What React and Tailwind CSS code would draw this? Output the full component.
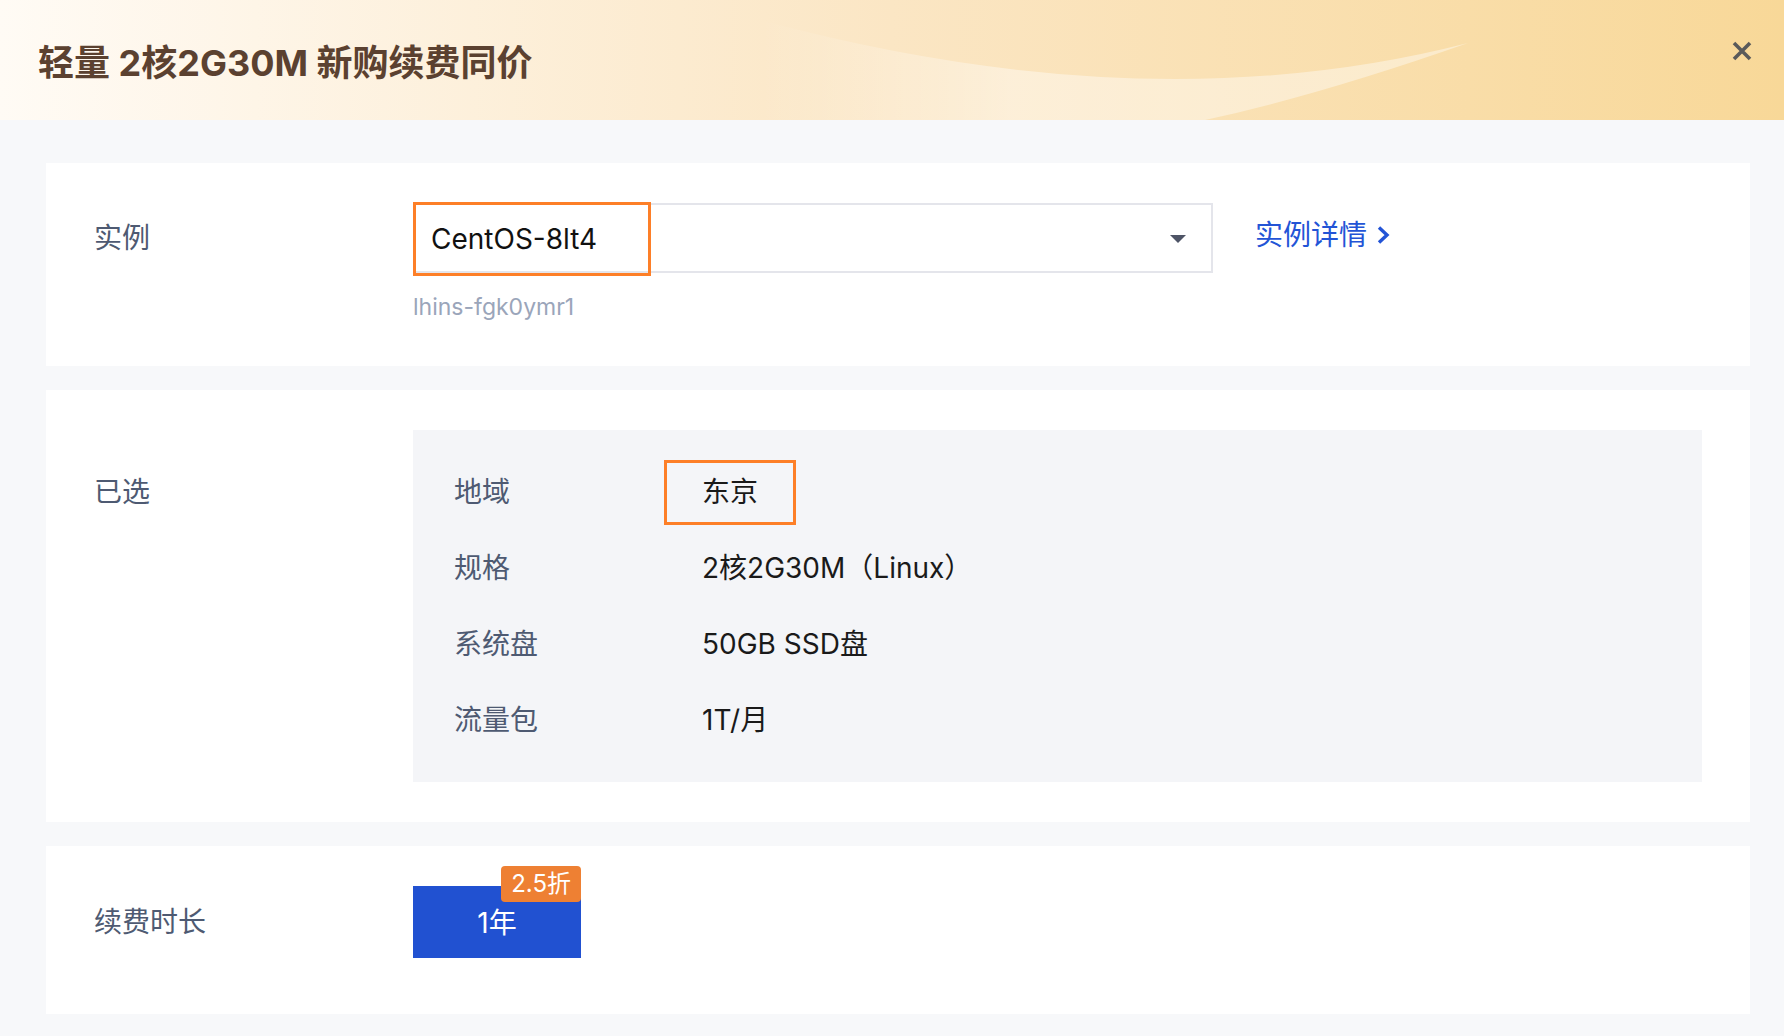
import React from 'react';

const font = { fontFamily: '"Inter", "Noto Sans CJK SC", sans-serif' };

const specs = [
  { label: '地域', value: '东京', highlight: true },
  { label: '规格', value: '2核2G30M（Linux）' },
  { label: '系统盘', value: '50GB SSD盘' },
  { label: '流量包', value: '1T/月' },
];

const Header = () => (
  <div className="relative h-[120px] bg-gradient-to-r from-[#fffbf5] via-[#fbe6c4] to-[#f8d898] overflow-hidden">
    {/* swoosh decoration */}
    <svg className="absolute inset-0" width="1784" height="120" viewBox="0 0 1784 120">
      <defs>
        <linearGradient id="swoosh" x1="0" y1="0" x2="1" y2="0">
          <stop offset="0" stopColor="#ffffff" stopOpacity="0" />
          <stop offset="0.35" stopColor="#ffffff" stopOpacity="0.4" />
          <stop offset="1" stopColor="#ffffff" stopOpacity="0.4" />
        </linearGradient>
      </defs>
      <path d="M 760 20 Q 1150 125 1468 43 Q 1320 95 1205 120 L 760 120 Z" fill="url(#swoosh)" />
    </svg>
    <div className="relative flex items-center justify-between h-full pl-[38px] pr-[32px]">
      <h1 className="text-[36px] font-bold text-[#5b4130] mt-[6px]">轻量 2核2G30M 新购续费同价</h1>
      <button className="w-[20px] h-[20px] -mt-[18px] text-[#5a5a5a]">
        <svg width="20" height="20" viewBox="0 0 20 20">
          <path d="M2 2 L18 18 M18 2 L2 18" stroke="currentColor" strokeWidth="3.6" strokeLinecap="butt" />
        </svg>
      </button>
    </div>
  </div>
);

const App = () => {
  return (
    <div className="min-h-[1036px] bg-[#f7f8fa] text-[28px]" style={font}>
      <Header />

      <div className="ml-[46px] mr-[34px] pt-[43px] flex flex-col gap-[24px]">
        {/* Instance card */}
        <div className="bg-white pl-[48px] pt-[40px] pb-[42px] flex">
          <div className="w-[319px] h-[70px] flex items-center text-[#4e5a72]">实例</div>
          <div>
            <div className="flex items-center">
              <div className="relative w-[800px] h-[70px] border-2 border-[#e4e5eb] flex items-center justify-end pr-[25px]">
                <div className="absolute left-[-2px] top-[-3px] w-[238px] h-[74px] border-[3px] border-[#fd7f28] flex items-center pl-[15px] text-[#111]">
                  CentOS-8lt4
                </div>
                <svg width="16" height="8" viewBox="0 0 16 8" className="mt-[2px]">
                  <path d="M0 0 L16 0 L8 8 Z" fill="#4e5466" />
                </svg>
              </div>
              <a className="ml-[42px] flex items-center gap-[10px] text-[#2354d6] -mt-[6px]">
                实例详情
                <svg width="13" height="18" viewBox="0 0 13 18">
                  <path d="M2 1.5 L10 9 L2 16.5" stroke="currentColor" strokeWidth="3.4" fill="none" />
                </svg>
              </a>
            </div>
            <div className="mt-[17px] text-[23px] text-[#9aa5ba] leading-[34px]">lhins-fgk0ymr1</div>
          </div>
        </div>

        {/* Selected card */}
        <div className="bg-white pl-[48px] pr-[48px] py-[40px] flex">
          <div className="w-[319px] pt-[24px]">
            <div className="h-[76px] flex items-center text-[#4e5a72]">已选</div>
          </div>
          <div className="flex-1 bg-[#f4f5f8] py-[24px] pl-[41px]">
            {specs.map((s) => (
              <div key={s.label} className="h-[76px] flex items-center">
                <div className="w-[248px] text-[#4e5a72]">{s.label}</div>
                {s.highlight ? (
                  <div className="-ml-[38px] w-[132px] h-[65px] border-[3px] border-[#fd7f28] flex items-center pl-[35px] text-[#1a1a1a]">
                    {s.value}
                  </div>
                ) : (
                  <div className="text-[#1a1a1a]">{s.value}</div>
                )}
              </div>
            ))}
          </div>
        </div>

        {/* Renewal card */}
        <div className="bg-white pl-[48px] pt-[40px] pb-[56px] flex items-center">
          <div className="w-[319px] text-[#4e5a72]">续费时长</div>
          <div className="relative">
            <button className="w-[168px] h-[72px] bg-[#2151d1] text-white flex items-center justify-center pt-[2px]">1年</button>
            <span className="absolute right-0 top-[-20px] h-[36px] px-[10px] rounded-[4px] bg-[#ee8033] text-white text-[24px] flex items-center">
              2.5折
            </span>
          </div>
        </div>
      </div>
    </div>
  );
};

export default App;
